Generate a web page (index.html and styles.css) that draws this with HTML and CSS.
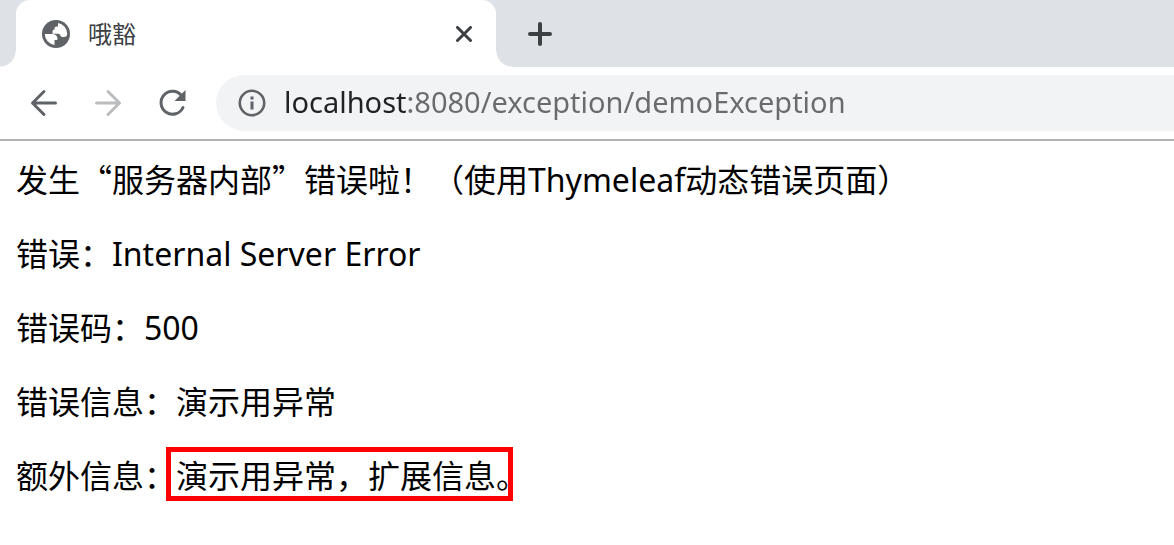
FILE: index.html
```html
<!DOCTYPE html>
<html lang="zh-CN">
<head>
<meta charset="utf-8">
<meta name="viewport" content="width=device-width, initial-scale=1">
<title>哦豁</title>
<link rel="stylesheet" href="styles.css">
</head>
<body>
<header class="browser">
  <div class="tab-strip">
    <div class="tab">
      <svg class="tab-icon" viewBox="0 0 28 28" aria-hidden="true">
        <circle cx="14" cy="14" r="14" fill="#5f6368"/>
        <path d="M2.800 14H10.500Q15.500 14.500 15.500 19Q15.500 20 14.500 20H12.500V25A11.200 11.200 0 0 1 2.800 14Z" fill="#fff"/>
        <path d="M16 3A11.200 11.200 0 0 1 25.200 14Q25 17 22 17H20.500Q18.500 17 18 14.500Q17.500 13.800 16 13.800H10.500V11.500Q10.500 9.500 12.500 9.500V8Q12.500 6.500 14.500 6.500H16Z" fill="#fff"/>
      </svg>
      <span class="tab-title">哦豁</span>
      <button class="icon-button tab-close" type="button" aria-label="关闭标签页">
        <svg class="close-icon" viewBox="0 0 16 16" aria-hidden="true"><path d="M1.500 1.500l13 13M14.500 1.500l-13 13" stroke="#3c4043" stroke-width="3" stroke-linecap="round"/></svg>
      </button>
    </div>
    <button class="icon-button new-tab" type="button" aria-label="新标签页">
      <svg class="icon" viewBox="0 0 24 24" aria-hidden="true"><path d="M12 2v20M2 12h20" stroke="#3c4043" stroke-width="4" stroke-linecap="round"/></svg>
    </button>
  </div>
  <div class="toolbar">
    <nav class="nav-buttons">
      <button class="icon-button" type="button" aria-label="后退">
        <svg class="nav-icon" viewBox="0 0 28 28" fill="none" stroke="#5f6368" stroke-width="3" stroke-linecap="round" stroke-linejoin="round" aria-hidden="true"><path d="M25.500 14H2.500M14 2.500L2.500 14L14 25.500"/></svg>
      </button>
      <button class="icon-button" type="button" aria-label="前进" disabled>
        <svg class="nav-icon" viewBox="0 0 28 28" fill="none" stroke="#babcbe" stroke-width="3" stroke-linecap="round" stroke-linejoin="round" aria-hidden="true"><path d="M2.500 14H25.500M14 2.500L25.500 14L14 25.500"/></svg>
      </button>
      <button class="icon-button" type="button" aria-label="重新加载">
        <svg class="nav-icon" viewBox="0 0 28 28" aria-hidden="true"><path d="M23.500 6.500A11.500 11.500 0 1 0 25 18.500" fill="none" stroke="#5f6368" stroke-width="3" stroke-linecap="round"/><path d="M27.500 1V12H16.500Z" fill="#5f6368"/></svg>
      </button>
    </nav>
    <div class="address-bar">
      <svg class="info-icon" viewBox="0 0 28 28" aria-hidden="true"><circle cx="14" cy="14" r="12.200" fill="none" stroke="#5f6368" stroke-width="2.600"/><path d="M12.500 7.500h3v3h-3zM12.500 12.500h3v8h-3z" fill="#5f6368"/></svg>
      <input class="address-input" type="text" aria-label="地址" value="localhost:8080/exception/demoException">
    </div>
  </div>
</header>
<main class="page">
  <p>发生<span class="quoted">“服务器内部”</span>错误啦！（使用Thymeleaf动态错误页面）</p>
  <p>错误：Internal Server Error</p>
  <p>错误码：500</p>
  <p>错误信息：演示用异常</p>
  <p>额外信息：<span class="highlight">演示用异常，扩展信息。</span></p>
</main>
</body>
</html>
```
FILE: styles.css
```css
* {
  box-sizing: border-box;
}

body {
  margin: 0;
  background: #fff;
  color: #000;
  font-family: "Noto Sans", "Noto Sans CJK SC", sans-serif;
}

.browser {
  border-bottom: 2px solid #b2b2b2;
}

.tab-strip {
  display: flex;
  align-items: center;
  padding-left: 16px;
  height: 67px;
  background: #dee1e6;
  overflow: hidden;
}

.tab {
  position: relative;
  display: flex;
  align-items: center;
  flex: 0 1 480px;
  height: 100%;
  padding: 0 20px 0 26px;
  border-radius: 14px 14px 0 0;
  background: #fff;
}

/* Outward curves at the foot of the active tab */
.tab::before,
.tab::after {
  content: "";
  position: absolute;
  bottom: 0;
  width: 16px;
  height: 16px;
}

.tab::before {
  right: 100%;
  background: radial-gradient(circle at 0 0, transparent 15px, #fff 16px);
}

.tab::after {
  left: 100%;
  background: radial-gradient(circle at 100% 0, transparent 15px, #fff 16px);
}

.tab-icon {
  width: 28px;
  height: 28px;
}

.tab-title {
  flex: 1;
  margin-left: 18px;
  color: #3c4043;
  font-size: 24px;
  line-height: 32px;
}

.icon-button {
  display: grid;
  place-items: center;
  width: 40px;
  height: 40px;
  padding: 0;
  border: 0;
  border-radius: 50%;
  background: none;
}

.tab-close {
  width: 24px;
  height: 24px;
}

.close-icon {
  width: 16px;
  height: 16px;
}

.new-tab {
  margin-left: 24px;
}

.icon {
  width: 24px;
  height: 24px;
}

.toolbar {
  display: flex;
  align-items: center;
  gap: 24px;
  padding: 8px 0 8px 24px;
}

.nav-buttons {
  display: flex;
  gap: 24px;
}

.nav-icon,
.info-icon {
  width: 28px;
  height: 28px;
}

.address-bar {
  display: flex;
  align-items: center;
  flex: 1;
  gap: 18px;
  height: 56px;
  padding-left: 22px;
  border-radius: 28px 0 0 28px;
  background: #f1f3f4;
}

.address-input {
  flex: 1;
  min-width: 0;
  height: 44px;
  padding: 0 0 4px;
  border: 0;
  outline: 0;
  background: linear-gradient(to right, #202124 122px, #696b6e 122px);
  background-clip: text;
  -webkit-background-clip: text;
  color: transparent;
  caret-color: #202124;
  font: 29px/40px "Noto Sans", sans-serif;
}

.page {
  padding: 18px 16px;
  font-size: 32px;
  line-height: 42px;
}

.page p {
  margin: 0 0 32px;
}

.quoted {
  font-family: "Noto Sans CJK SC", sans-serif;
  line-height: 1;
}

.highlight {
  position: relative;
}

/* Red marker frame laid over the text */
.highlight::after {
  content: "";
  position: absolute;
  inset: -7px 15px -4px -10px;
  border: 5px solid #f00;
}
```
